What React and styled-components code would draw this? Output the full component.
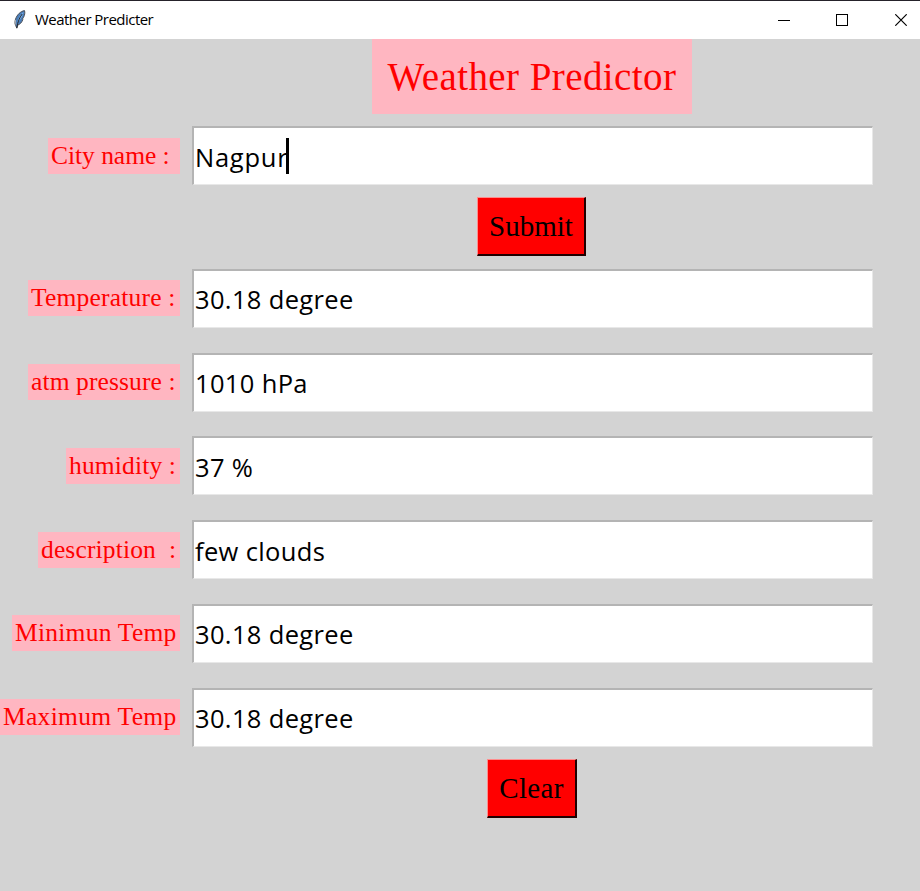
import React from "react";
import styled, { createGlobalStyle } from "styled-components";

const GlobalStyle = createGlobalStyle`
  * { box-sizing: border-box; }
  body { margin: 0; background: #d3d3d3; }
`;

const Window = styled.div`
  display: flex;
  flex-direction: column;
  width: 920px;
  height: 891px;
  overflow: hidden;
  background: #d3d3d3;
`;

const TitleBar = styled.header`
  display: flex;
  align-items: center;
  height: 39px;
  flex: none;
  padding-left: 12px;
  border-top: 1px solid #25222a;
  background: #fff;
`;

const Caption = styled.span`
  flex: 1;
  margin: -2px 0 0 7px;
  font: 15px/20px "Open Sans", sans-serif;
  letter-spacing: -0.53px;
  color: #000;
  white-space: pre;
`;

const WindowControls = styled.div`
  display: flex;
  gap: 46px;
  padding-right: 14px;

  svg { display: block; }
  svg:last-child { margin-right: -1px; margin-left: 1px; }
`;

const Form = styled.main`
  display: grid;
  grid-template-columns: 180px 681px;
  grid-template-rows: 75px 71.5px 70.9px repeat(6, 83.75px) 60px;
  column-gap: 12px;
  font-family: "Liberation Serif", serif;
`;

const Heading = styled.h1`
  grid-column: 2;
  justify-self: center;
  width: 320px;
  height: 75px;
  margin: 0 1px 0 0;
  background: #ffb6c1;
  color: #f00;
  font-size: 39px;
  font-weight: 400;
  line-height: 75px;
  letter-spacing: 0.42px;
  text-align: center;
  white-space: pre;
`;

const LabelCell = styled.div`
  display: flex;
  align-items: center;
  justify-content: flex-end;
  padding-top: ${(p) => (p.$first ? "12px" : "0")};
`;

const Label = styled.label`
  width: ${(p) => p.$width}px;
  height: 36px;
  padding-left: 3px;
  background: #ffb6c1;
  color: #f00;
  font-size: 25.5px;
  line-height: 36px;
  letter-spacing: ${(p) => p.$spacing ?? 0.2}px;
  white-space: pre;
`;

const FieldCell = styled.div`
  display: flex;
  align-items: center;
  padding-top: ${(p) => (p.$first ? "12px" : "0")};
`;

const Field = styled.div`
  display: flex;
  align-items: center;
  width: 681px;
  height: 59px;
  padding: 1px 0 0 1px;
  border-style: solid;
  border-width: 2px 1px 1px 2px;
  border-color: #b4b4b4 #e8e8e8 #e8e8e8 #b4b4b4;
  background: #fff;
  color: #000;
  font: 25.5px/36px "Open Sans", sans-serif;
  letter-spacing: ${(p) => p.$spacing ?? 0.35}px;
  white-space: pre;
`;

const Caret = styled.span`
  width: 3px;
  height: 36px;
  margin: -1px 0 0 -2px;
  background: #000;
`;

const Button = styled.button`
  grid-column: 2;
  align-self: ${(p) => (p.$last ? "start" : "end")};
  justify-self: center;
  width: ${(p) => p.$width}px;
  height: 59px;
  margin: 0 ${(p) => p.$shift}px 0 0;
  padding: 0;
  border-style: solid;
  border-width: 1px 2px 2px 1px;
  border-color: #ff8c8c #200000 #200000 #ff8c8c;
  background: #f00;
  color: #000;
  font: 29px/54px "Liberation Serif", serif;
  letter-spacing: ${(p) => p.$spacing ?? 0}px;
`;

const Feather = () => (
  <svg width="16" height="22" viewBox="0 0 16 22">
    <path d="M12.5 1.6C8.8 2.2 5 5.6 3.5 10.2c-.7 2.5-.8 4.4.1 6.1l1.2 2.9 1-3.2c2.3-.7 4.1-2.7 5-5.4l-.3-.7 1-1.5C12.7 6.3 13.2 3.4 12.5 1.6Z" fill="#4a7db8" stroke="#4c4f56" strokeWidth="1" />
    <path d="M11.5 3C8.5 5.1 6 9.2 5.5 13.2c2.4-1.7 5.5-6.3 6-10.2Z" fill="#7db0e6" />
    <path d="M10.2 5C7.5 8.6 5.6 12.9 4.8 19" stroke="#222933" fill="none" />
    <path d="m3.4 11 .4 4.6" stroke="#a9adb2" fill="none" />
  </svg>
);

const READINGS = [
  { label: "Temperature :", value: "30.18 degree", width: 152, spacing: 0.2 },
  { label: "atm pressure :", value: "1010 hPa", width: 152, spacing: 0.12 },
  { label: "humidity :", value: "37 %", width: 114, spacing: 0.15 },
  { label: "description  :", value: "few clouds", width: 142, spacing: 0.15 },
  { label: "Minimun Temp", value: "30.18 degree", width: 168, spacing: 0.25 },
  { label: "Maximum Temp", value: "30.18 degree", width: 180, spacing: 0.3 },
];

export default function App() {
  return (
    <Window>
      <GlobalStyle />
      <TitleBar>
        <Feather />
        <Caption>Weather Predicter</Caption>
        <WindowControls>
          <svg width="12" height="12" shapeRendering="crispEdges"><path d="M0 6.5h12" stroke="#000" /></svg>
          <svg width="12" height="12" shapeRendering="crispEdges"><path d="M.5.5h11v11H.5z" fill="none" stroke="#000" /></svg>
          <svg width="12" height="12"><path d="m.3.3 11.4 11.4m0-11.4L.3 11.7" stroke="#000" strokeWidth="1.2" /></svg>
        </WindowControls>
      </TitleBar>
      <Form>
        <Heading>Weather Predictor</Heading>
        <LabelCell $first><Label $width={132} $spacing={-0.03}>City name : </Label></LabelCell>
        <FieldCell $first><Field $spacing={0.75}>Nagpur<Caret /></Field></FieldCell>
        <Button $width={109} $shift={2}>Submit</Button>
        {READINGS.map((r) => (
          <React.Fragment key={r.label}>
            <LabelCell><Label $width={r.width} $spacing={r.spacing}>{r.label}</Label></LabelCell>
            <FieldCell><Field>{r.value}</Field></FieldCell>
          </React.Fragment>
        ))}
        <Button $width={90} $shift={1} $spacing={0.3} $last>Clear</Button>
      </Form>
    </Window>
  );
}
